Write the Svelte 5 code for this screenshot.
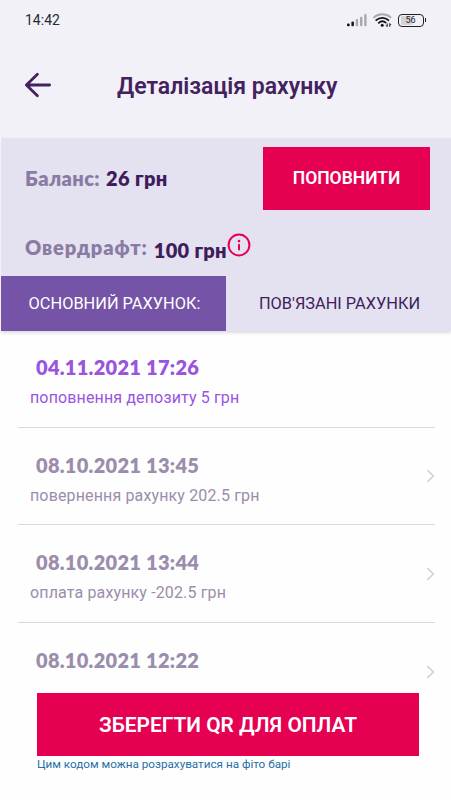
<!--
@component
Account details screen: balance, overdraft and the list of operations.
-->
<script lang="ts">
  type Operation = { date: string; text: string; active?: boolean };

  const operations: Operation[] = [
    { date: "04.11.2021 17:26", text: "поповнення депозиту 5 грн", active: true },
    { date: "08.10.2021 13:45", text: "повернення рахунку 202.5 грн" },
    { date: "08.10.2021 13:44", text: "оплата рахунку -202.5 грн" },
    { date: "08.10.2021 12:22", text: "" },
  ];
</script>

<div class="screen">
  <div class="status">
    <span class="time">14:42</span>
    <svg class="signal" width="20" height="13" viewBox="0 0 20 13">
      <rect x="0" y="9.5" width="2.7" height="2.7" rx="1" fill="#15131a" />
      <rect x="4.4" y="7.5" width="2.5" height="4.7" rx="1" fill="#15131a" />
      <rect x="8.7" y="5" width="2.4" height="7.2" rx="1" fill="#a9a8ae" />
      <rect x="13" y="2.7" width="2.4" height="9.5" rx="1" fill="#a9a8ae" />
      <rect x="17.2" y="0" width="2.4" height="12.2" rx="1" fill="#a9a8ae" />
    </svg>
    <svg class="wifi" width="19" height="15" viewBox="0 0 19 15" fill="none" stroke-linecap="round">
      <path d="M1 4.3C5.6.2 13 .2 17.6 4.3" stroke="#a9a8ae" stroke-width="1.8" />
      <path d="M3.2 7.2C6.7 4 12 4 15.4 7.2" stroke="#15131a" stroke-width="1.8" />
      <path d="M5.8 9.8C7.8 8 10.7 8 12.6 9.5" stroke="#15131a" stroke-width="1.8" />
      <circle cx="9.2" cy="12.2" r="1.5" fill="#15131a" />
      <path d="M14.2 10.8v2.8l-1-1M16.8 13.4v-2.8l1 1" stroke="#15131a" stroke-width="1" />
    </svg>
    <span class="battery"><i></i><b>56</b></span>
  </div>

  <header>
    <svg width="28" height="28" viewBox="0 0 28 28" fill="none" stroke="#43225f" stroke-width="2.8" stroke-linecap="round" stroke-linejoin="round">
      <path d="M25.6 14H2.4M13.4 3.2L2.4 14l11 10.8" />
    </svg>
    <h1>Деталізація рахунку</h1>
  </header>

  <section class="summary">
    <div class="line balance">
      <span class="label">Баланс:</span>
      <span class="value">26 грн</span>
      <button class="topup">ПОПОВНИТИ</button>
    </div>
    <div class="line overdraft">
      <span class="label">Овердрафт:</span>
      <span class="value">100 грн</span>
      <svg width="24" height="24" viewBox="0 0 24 24">
        <circle cx="12" cy="12" r="10.4" fill="none" stroke="#e60052" stroke-width="2" />
        <circle cx="12" cy="8.1" r="1.3" fill="#e60052" />
        <path d="M12 11.8v4.7" stroke="#e60052" stroke-width="2" stroke-linecap="round" />
      </svg>
    </div>
    <nav>
      <button class="tab selected"><span>ОСНОВНИЙ РАХУНОК:</span></button>
      <button class="tab"><span>ПОВ'ЯЗАНІ РАХУНКИ</span></button>
    </nav>
  </section>

  <ul>
    {#each operations as operation (operation.date)}
      <li class:active={operation.active}>
        <div>
          <h4>{operation.date}</h4>
          {#if operation.text}
            <p>{operation.text}</p>
          {/if}
        </div>
        {#if !operation.active}
          <svg width="9" height="14" viewBox="0 0 9 14" fill="none" stroke="#d3d2d5" stroke-width="1.6" stroke-linecap="round">
            <path d="M1.8 1.6L7.4 7l-5.6 5.4" />
          </svg>
        {/if}
      </li>
    {/each}
  </ul>

  <footer>
    <button class="save">ЗБЕРЕГТИ QR ДЛЯ ОПЛАТ</button>
    <p>Цим кодом можна розрахуватися на фіто барі</p>
  </footer>
</div>

<style>
  :global(body) {
    background: #fefefe;
  }
  .screen {
    width: 451px;
    height: 800px;
    box-sizing: border-box;
    overflow: hidden;
    display: flex;
    flex-direction: column;
    font-family: Roboto, "Liberation Sans", sans-serif;
    background: #fefefe;
  }
  button {
    border: 0;
    padding: 0;
    margin: 0;
    font-family: inherit;
    white-space: nowrap;
  }
  svg {
    flex: none;
    display: block;
  }
  .status {
    height: 40px;
    flex: none;
    display: flex;
    align-items: center;
    padding: 0 25px;
    background: #f2f1f7;
  }
  .time {
    font-size: 14px;
    color: #2b2931;
    margin-right: auto;
  }
  .signal {
    margin-right: 6px;
  }
  .wifi {
    margin-right: 6px;
  }
  .battery {
    position: relative;
    box-sizing: border-box;
    width: 26px;
    height: 13px;
    margin-right: 2.5px;
    border: 1.5px solid #222027;
    border-radius: 4px;
    display: flex;
    align-items: center;
    justify-content: center;
  }
  .battery i {
    position: absolute;
    left: 2px;
    top: 1px;
    bottom: 1px;
    width: 11px;
    background: #d3d2d8;
    border-radius: 1px;
  }
  .battery::after {
    content: "";
    position: absolute;
    right: -3.5px;
    top: 3px;
    width: 1.5px;
    height: 4px;
    background: #222027;
  }
  .battery b {
    position: relative;
    font-size: 9px;
    line-height: 10px;
    font-weight: 400;
    color: #222027;
  }
  header {
    height: 98px;
    flex: none;
    box-sizing: border-box;
    display: flex;
    align-items: flex-start;
    padding: 31px 0 0 24px;
    background: #f2f1f7;
  }
  h1 {
    margin: 2px 0 0 65px;
    font-size: 23px;
    line-height: 28px;
    font-weight: 600;
    color: #43225f;
    white-space: nowrap;
  }
  .summary {
    flex: none;
    margin-left: 1px;
    background: #e4e1f0;
    box-shadow: 0 2px 3px #dcdae0;
  }
  .line {
    display: flex;
    align-items: center;
    padding-left: 24px;
    font-family: Lato, "Open Sans", sans-serif;
    font-weight: 800;
    font-size: 20px;
    letter-spacing: 0.4px;
    white-space: nowrap;
  }
  .label {
    color: #8a7ba3;
  }
  .value {
    color: #3f1d5c;
  }
  .balance {
    height: 80px;
  }
  .balance .value {
    margin-left: 6px;
  }
  .topup {
    width: 167px;
    height: 63px;
    margin: 0 21px 0 auto;
    background: #e60052;
    color: #fff;
    font-family: Roboto, sans-serif;
    font-size: 17.5px;
    font-weight: 600;
  }
  .overdraft {
    height: 58px;
  }
  .overdraft .label {
    letter-spacing: 0.9px;
  }
  .overdraft .value {
    margin: 5px 0 0 6px;
    letter-spacing: 0.3px;
  }
  .overdraft svg {
    margin-top: -5px;
  }
  nav {
    display: flex;
    height: 55px;
  }
  .tab {
    width: 225px;
    background: none;
    color: #3f1d5c;
    font-size: 16.35px;
  }
  .tab + .tab {
    padding-left: 2px;
  }
  .tab.selected {
    padding-left: 2px;
    background: #7553a6;
    color: #fff;
  }
  ul {
    list-style: none;
    padding: 0 16px 0 18px;
    margin: 0;
    height: 362px;
    flex: none;
    overflow: hidden;
  }
  li {
    height: 97.7px;
    box-sizing: border-box;
    display: flex;
    justify-content: space-between;
    align-items: center;
    border-bottom: 1px solid #d9d7e0;
    color: #9b8dac;
  }
  li:first-child {
    height: 96.8px;
  }
  li > div {
    align-self: flex-start;
    padding: 24px 0 0 12px;
  }
  li:first-child > div {
    padding-top: 23px;
  }
  li.active {
    color: #9a55df;
  }
  h4 {
    margin: 0 0 0 6px;
    font-family: Lato, "Open Sans", sans-serif;
    font-weight: 800;
    font-size: 20px;
    line-height: 26px;
    letter-spacing: 0.28px;
  }
  li p {
    margin: 8px 0 0;
    font-size: 16px;
    line-height: 20px;
    letter-spacing: 0.14px;
    white-space: nowrap;
  }
  footer {
    padding: 0 32px 0 37px;
  }
  .save {
    display: block;
    width: 100%;
    height: 63px;
    background: #e60052;
    color: #fff;
    font-size: 20.9px;
    font-weight: 600;
  }
  footer p {
    font-size: 11.7px;
    line-height: 16px;
    margin: 0;
    color: #1f6fa8;
    white-space: nowrap;
  }
</style>
